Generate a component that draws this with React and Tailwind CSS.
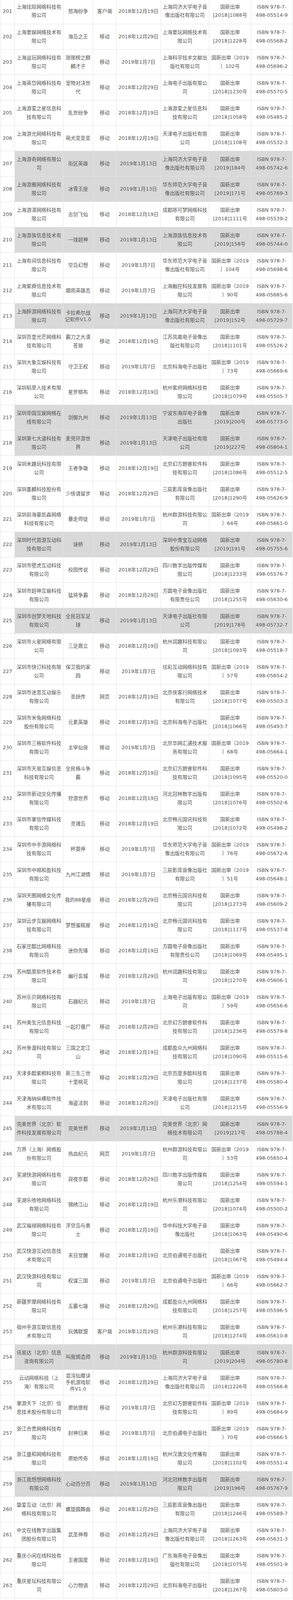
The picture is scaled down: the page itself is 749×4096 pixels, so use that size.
const rows = [
  [201, "上海炫际网络科技有限公司", "怒海纷争", "客户端", "2018年12月19日", "上海同济大学电子音像出版社有限公司", "[2018]1088", "05514-9"],
  [202, "上海要娱网络技术有限公司", "海岛之王", "移动", "2018年12月29日", "上海要玩网络技术有限公司", "[2018]1228", "05568-2"],
  [203, "上海益玩网络科技有限公司", "琅琊榜之麒麟才子", "移动", "2019年1月7日", "上海科学技术文献出版社有限公司", "〔2019〕102", "05696-2"],
  [204, "上海英岱网络科技有限公司", "宠物对决世代", "移动", "2018年12月29日", "上海电子出版有限公司", "[2018]1230", "05570-5"],
  [205, "上海游爱之星信息科技有限公司", "乱世纷争", "移动", "2018年12月19日", "上海游爱之星信息科技有限公司", "[2018]1058", "05485-2"],
  [206, "上海游光网络科技有限公司", "萌犬变变变", "移动", "2018年12月19日", "天津电子出版社有限公司", "[2018]1108", "05532-3"],
  [207, "上海游奇网络有限公司", "街区英雄", "移动", "2019年1月13日", "上海同济大学电子音像出版社有限公司", "[2019]184", "05742-6"],
  [208, "上海游雁网络科技有限公司", "冰雪王座", "移动", "2019年1月13日", "华东师范大学电子音像出版社有限公司", "[2019]171", "05769-3"],
  [209, "上海游湛网络科技有限公司", "古剑飞仙", "移动", "2018年12月19日", "成都哆可梦网络科技有限公司", "[2018]1111", "05539-2"],
  [210, "上海游族信息技术有限公司", "一球超神", "移动", "2019年1月13日", "上海游族信息技术有限公司", "[2019]158", "05744-0"],
  [211, "上海有间信息科技有限公司", "空岛幻想", "移动", "2019年1月7日", "华东师范大学电子音像出版社有限公司", "〔2019〕104", "05698-6"],
  [212, "上海紫舜信息技术有限公司", "烟雨英雄志", "移动", "2019年1月7日", "上海触控科技发展有限公司", "〔2019〕90", "05685-6"],
  [213, "上海醉游网络科技有限公司", "卡拉希尔战记软件V1.0", "移动", "2019年1月13日", "上海同济大学电子音像出版社有限公司", "[2019]152", "05729-7"],
  [214, "深圳百里光芒网络科技有限公司", "霸刀之大漠苍狼", "移动", "2018年12月19日", "江苏凤凰电子音像出版社有限公司", "[2018]1101", "05526-2"],
  [215, "深圳大象互娱科技有限公司", "守卫王权", "移动", "2019年1月7日", "北京科海电子出版社", "〔2019〕73", "05669-6"],
  [216, "深圳稻草人技术有限公司", "星罗棋布", "移动", "2018年12月19日", "杭州紫府网络科技有限公司", "[2018]1079", "05505-7"],
  [217, "深圳帝国互娱网络在线有限公司", "剑御九州", "移动", "2019年1月13日", "宁波东海岸电子音像出版社", "[2019]200", "05773-0"],
  [218, "深圳第七大道科技有限公司", "麦兜环游世界", "移动", "2019年1月13日", "天津电子出版社有限公司", "[2019]227", "05804-1"],
  [219, "深圳米趣玩科技有限公司", "王者争雄", "移动", "2018年12月19日", "北京幻方朗睿软件科技有限公司", "[2018]1086", "05512-5"],
  [220, "深圳墨麟科技股份有限公司", "少侠请留步", "移动", "2018年12月29日", "三辰影库音像出版社有限公司", "[2018]1290", "05626-9"],
  [221, "深圳前海豪凯森网络科技有限公司", "暴走师徒", "移动", "2019年1月7日", "杭州群游科技有限公司", "〔2019〕64", "05661-0"],
  [222, "深圳时代首游互动科技有限公司", "谜桥", "移动", "2019年1月13日", "深圳中青宝互动网络股份有限公司", "[2019]191", "05755-6"],
  [223, "深圳市壁虎互动科技有限公司", "校园传说", "移动", "2018年12月29日", "四川数字出版传媒有限公司", "[2018]1233", "05576-7"],
  [224, "深圳市超神互娱科技有限公司", "猛将争霸", "移动", "2018年12月29日", "方圆电子音像出版社有限责任公司", "[2018]1255", "05630-6"],
  [225, "深圳市创梦天地科技有限公司", "全民冠军足球", "移动", "2019年1月13日", "天津电子出版社有限公司", "[2019]178", "05732-7"],
  [226, "深圳市火星网络有限公司", "三足鼎立", "移动", "2018年12月19日", "杭州润趣科技有限公司", "[2018]1093", "05518-7"],
  [227, "深圳市快订科技有限公司", "保卫我的家园", "移动", "2019年1月7日", "炫彩互动网络科技有限公司", "〔2019〕57", "05654-2"],
  [228, "深圳市迷思互动娱乐有限公司", "圣妖传", "网页", "2018年12月19日", "北京侠客行网络技术有限公司", "[2018]1077", "05503-3"],
  [229, "深圳市米兔网络科技股份有限公司", "元素英雄", "移动", "2018年12月19日", "北京科海电子出版社", "[2018]1066", "05493-7"],
  [230, "深圳市三格软件科技有限公司", "主宰仙侠", "移动", "2019年1月7日", "北京华网汇通技术服务有限公司", "〔2019〕68", "05664-1"],
  [231, "深圳市天易互娱信息科技有限公司", "全民格斗争霸", "移动", "2018年12月19日", "北京幻方朗睿软件科技有限公司", "[2018]1095", "05520-0"],
  [232, "深圳市新动文化传播有限公司", "狩游世界", "移动", "2018年12月19日", "河北冠林数字出版有限公司", "[2018]1076", "05502-6"],
  [233, "深圳市掌信传媒科技有限公司", "灵魂岛", "移动", "2018年12月19日", "北京畅元国讯科技有限公司", "[2018]1072", "05498-2"],
  [234, "深圳市中手游网络科技有限公司", "杯莫停", "移动", "2019年1月7日", "华东师范大学电子音像出版社有限公司", "〔2019〕76", "05672-6"],
  [235, "深圳市中顺和盈科技有限公司", "九州江湖情", "移动", "2019年1月7日", "三辰影库音像出版社有限公司", "〔2019〕51", "05648-1"],
  [236, "深圳天图网络文化传播有限公司", "我的88星座", "移动", "2018年12月29日", "北京畅元国讯科技有限公司", "[2018]1273", "05609-2"],
  [237, "深圳云步互娱网络科技有限公司", "梦想蛋糕屋", "移动", "2018年12月19日", "北京畅元国讯科技有限公司", "[2018]1117", "05537-8"],
  [238, "石家庄酷比网络科技有限公司", "迷你先锋", "移动", "2018年12月19日", "方圆电子音像出版社有限责任公司", "[2018]1069", "05495-1"],
  [239, "苏州酷昊软件技术有限公司", "幽行玄城", "移动", "2018年12月29日", "杭州润趣科技有限公司", "[2018]1270", "05606-1"],
  [240, "苏州乐贝网络科技有限公司", "石器纪元", "移动", "2019年1月7日", "上海电子出版有限公司", "〔2019〕59", "05656-6"],
  [241, "苏州美生元信息科技有限公司", "一起打僵尸", "移动", "2018年12月29日", "北京幻方朗睿软件科技有限公司", "[2018]1236", "05579-8"],
  [242, "苏州争渡科技有限公司", "三国之定江山", "移动", "2018年12月19日", "成都盈众九州网络科技有限公司", "[2018]1090", "05515-6"],
  [243, "天津多酷紫桐科技有限公司", "新三生三世十里桃花", "移动", "2018年12月29日", "北京百度多酷科技有限公司", "[2018]1237", "05580-4"],
  [244, "天津海纳纵横软件技术有限公司", "海盗法则", "移动", "2018年12月29日", "天津电子出版社有限公司", "[2018]1215", "05556-9"],
  [245, "完美世界（北京）软件科技发展有限公司", "完美世界", "移动", "2019年1月13日", "完美世界（北京）网络技术有限公司", "[2019]217", "05788-4"],
  [246, "万界（上海）网络股份有限公司", "热血纪元", "网页", "2019年1月7日", "杭州群游科技有限公司", "〔2019〕53", "05650-4"],
  [247, "芜湖快游网络科技有限公司", "寂夜京都", "移动", "2018年12月29日", "四川数字出版传媒有限公司", "[2018]1254", "05594-1"],
  [248, "芜湖乐哈哈网络科技有限公司", "锦绣江山", "移动", "2018年12月19日", "杭州乐港科技有限公司", "[2018]1074", "05500-2"],
  [249, "武汉福禄网络科技有限公司", "浮空岛与勇士", "移动", "2018年12月19日", "华中科技大学电子音像出版社", "[2018]1063", "05490-6"],
  [250, "武汉快游互动信息技术有限公司", "末日觉醒", "移动", "2018年12月19日", "北京伯通电子出版社", "[2018]1067", "05494-4"],
  [251, "武汉快游科技有限公司", "权谋三国", "移动", "2019年1月7日", "北京伯通电子出版社", "〔2019〕66", "05662-7"],
  [252, "新疆罗摩网络科技有限公司", "五霸七雄", "移动", "2018年12月29日", "成都盈众九州网络科技有限公司", "[2018]1257", "05596-5"],
  [253, "宿州手游互联信息技术有限公司", "玩偶联盟", "客户端", "2018年12月29日", "杭州乐港科技有限公司", "[2018]1274", "05610-8"],
  [254, "讯易达（北京）信息咨询有限公司", "叫我铸造师", "移动", "2019年1月13日", "杭州群游科技有限公司", "[2019]204", "05780-8"],
  [255, "云动网络科技（上海）有限公司", "混沌仙魔诀手机游戏软件V1.0", "移动", "2018年12月29日", "上海同济大学电子音像出版社有限公司", "[2018]1226", "05566-8"],
  [256, "掌游天下（北京）信息技术股份有限公司", "原始旅程", "移动", "2019年1月7日", "北京幻方朗睿软件科技有限公司", "〔2019〕89", "05684-9"],
  [257, "浙江合贵网络科技有限公司", "封神归来", "移动", "2019年1月7日", "北京伯通电子出版社", "〔2019〕70", "05666-5"],
  [258, "浙江盛和网络科技有限公司", "原始传奇", "移动", "2018年12月19日", "杭州汉唐文化传播有限公司", "[2018]1102", "05551-4"],
  [259, "浙江我想想网络科技有限公司", "心动百分百", "移动", "2019年1月13日", "河北冠林数字出版有限公司", "[2019]196", "05767-9"],
  [260, "挚爱互动（北京）网络科技有限公司", "螺旋圆舞曲", "移动", "2018年12月29日", "三辰影库音像出版社有限公司", "[2018]1246", "05589-7"],
  [261, "中文在线数字出版集团股份有限公司", "武圣神尊", "移动", "2018年12月29日", "上海同济大学电子音像出版社有限公司", "[2018]1263", "05631-3"],
  [262, "重庆小闲在线科技有限公司", "王者国度", "移动", "2018年12月19日", "广东海燕电子音像出版社有限公司", "[2018]1075", "05501-9"],
  [263, "重庆星坛科技有限公司", "心力物语", "移动", "2018年12月29日", "北京科海电子出版社", "[2018]1267", "05603-0"],
];

// highlighted rows (gray background)
const shaded = new Set([207, 208, 210, 213, 217, 218, 222, 225, 245, 254, 259]);

function Code({ code }) {
  if (code.startsWith("〔")) {
    // 〔2019〕102 -> 国新出审〔2019 / 〕102号
    return (
      <>
        国新出审〔2019
        <br />
        〕{code.slice(6)}号
      </>
    );
  }
  return (
    <>
      国新出审
      <br />
      {code}号
    </>
  );
}

export default function App() {
  return (
    <div className="w-[749px] bg-white font-['DejaVu_Sans','Noto_Sans_CJK_SC',sans-serif] text-[12.7px] leading-[21.5px] text-[#555555]">
      <table className="w-[747px] table-fixed border-collapse">
        <colgroup>
          <col className="w-[37px]" />
          <col className="w-[124px]" />
          <col className="w-[76px]" />
          <col className="w-[60px]" />
          <col className="w-[113px]" />
          <col className="w-[124px]" />
          <col className="w-[107px]" />
          <col className="w-[106px]" />
        </colgroup>
        <tbody>
          {rows.map((r, i) => {
            const [no, company, game, platform, date, publisher, code, isbn] = r;
            const bg = shaded.has(no) ? "bg-[#d9d9d9]" : "bg-white";
            const first = i === 0;
            const cell = `border border-[#e4e4e4] text-center align-middle px-0.5 ${first ? "h-[61px] border-t-0 pb-[4px] pt-0" : "h-[65px] py-0"}`;
            return (
              <tr key={no}>
                <td className={`${cell} bg-white`}>{no}</td>
                <td className={`${cell} ${bg}`}>{company}</td>
                <td className={`${cell} ${bg} ${game.length > 10 ? "leading-[17px]" : ""}`}>{game}</td>
                <td className={`${cell} ${bg}`}>{platform}</td>
                <td className={`${cell} ${bg}`}>{date}</td>
                <td className={`${cell} ${bg}`}>{publisher}</td>
                <td className={`${cell} ${bg}`}>
                  <Code code={code} />
                </td>
                <td className={`${cell} ${bg}`}>
                  ISBN 978-7-
                  <br />
                  498-{isbn}
                </td>
              </tr>
            );
          })}
        </tbody>
      </table>
    </div>
  );
}
